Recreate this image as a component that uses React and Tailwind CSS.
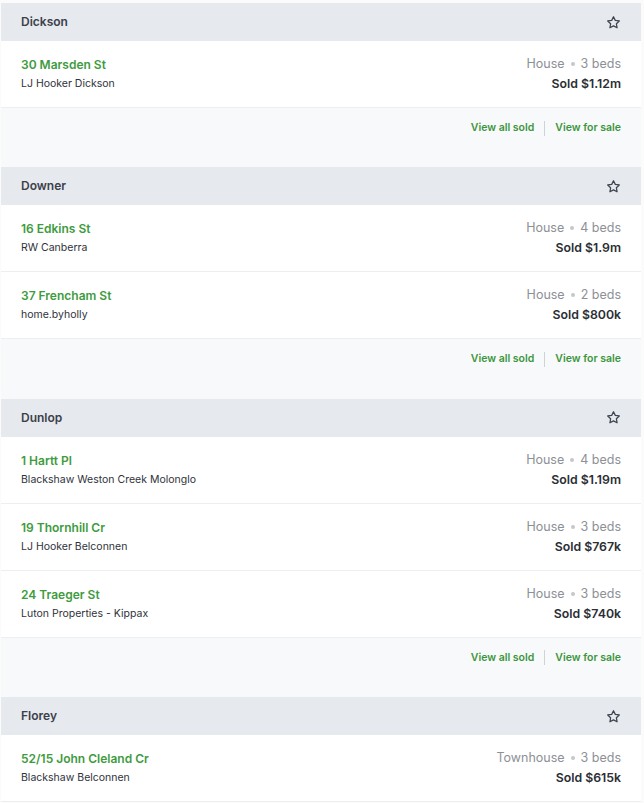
import React from "react";

const sections = [
  { name: "Dickson", rows: [["30 Marsden St", "LJ Hooker Dickson", "House", "3 beds", "Sold $1.12m"]], footer: true },
  {
    name: "Downer",
    rows: [
      ["16 Edkins St", "RW Canberra", "House", "4 beds", "Sold $1.9m"],
      ["37 Frencham St", "home.byholly", "House", "2 beds", "Sold $800k"],
    ],
    footer: true,
  },
  {
    name: "Dunlop",
    rows: [
      ["1 Hartt Pl", "Blackshaw Weston Creek Molonglo", "House", "4 beds", "Sold $1.19m"],
      ["19 Thornhill Cr", "LJ Hooker Belconnen", "House", "3 beds", "Sold $767k"],
      ["24 Traeger St", "Luton Properties - Kippax", "House", "3 beds", "Sold $740k"],
    ],
    footer: true,
  },
  {
    name: "Florey",
    rows: [["52/15 John Cleland Cr", "Blackshaw Belconnen", "Townhouse", "3 beds", "Sold $615k"]],
    footer: false,
  },
];

function StarIcon() {
  return (
    <svg width="15" height="15" viewBox="0 0 24 24" fill="none" stroke="#3d4350" strokeWidth="2" strokeLinejoin="round">
      <path d="M12 2.8l2.85 5.8 6.4.93-4.63 4.5 1.1 6.37L12 17.4l-5.72 3 1.1-6.37-4.63-4.5 6.4-.93L12 2.8z" />
    </svg>
  );
}

export default function App() {
  return (
    <div className="min-h-[803px] bg-[#fbfbfc] pt-[3px] pl-[1px]" style={{ fontFamily: "Inter, 'Noto Sans', sans-serif" }}>
      <div className="w-[640px]">
        {sections.map((s) => (
          <div key={s.name}>
            <div className="h-[38px] bg-[#e6e9ed] px-5 flex items-center justify-between">
              <span className="text-[12px] font-semibold text-[#3b404b]">{s.name}</span>
              <StarIcon />
            </div>
            {s.rows.map((r) => (
              <div key={r[0]} className="h-[67px] bg-white border-b border-[#eceef1] px-5 flex items-center justify-between">
                <div className="flex flex-col pt-[1px]">
                  <span className="text-[12px] leading-[19px] font-semibold text-[#3e9b3e]">{r[0]}</span>
                  <span className="text-[10.5px] leading-[20px] text-[#2f323a]">{r[1]}</span>
                </div>
                <div className="flex flex-col items-end">
                  <span className="text-[12.5px] leading-[20px] text-[#8d9096] flex items-center">
                    {r[2]}
                    <span className="inline-block w-[4px] h-[4px] rounded-full bg-[#c4c7cb] mx-[6px]"></span>
                    {r[3]}
                  </span>
                  <span className="text-[12.3px] leading-[20px] font-semibold text-[#2b2e35]">{r[4]}</span>
                </div>
              </div>
            ))}
            {s.footer && (
              <div className="h-[59.4px] bg-[#f8f9fb] px-5 pt-[12px] flex justify-end items-start">
                <div className="flex items-center">
                  <span className="text-[10.5px] leading-[16px] font-semibold text-[#3c963c]">View all sold</span>
                  <span className="w-px h-[15px] bg-[#cfd3d8] mx-[10px]"></span>
                  <span className="text-[10.5px] leading-[16px] font-semibold text-[#3c963c]">View for sale</span>
                </div>
              </div>
            )}
          </div>
        ))}
      </div>
    </div>
  );
}
